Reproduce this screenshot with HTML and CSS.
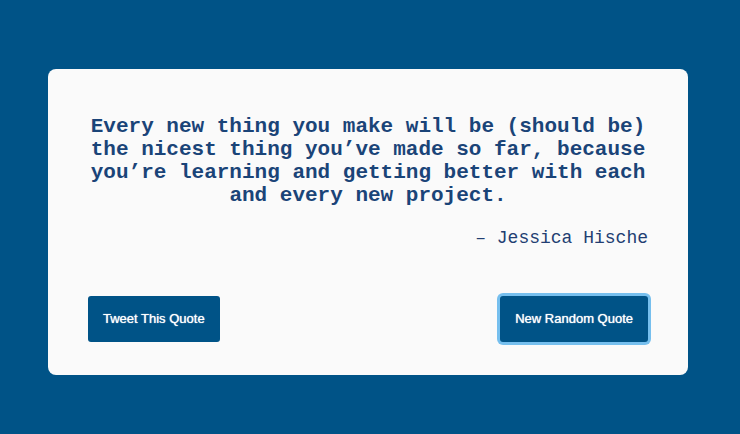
FILE: index.html
```html
<!DOCTYPE html>
<html lang="en">
<head>
<meta charset="utf-8">
<meta name="viewport" content="width=device-width, initial-scale=1">
<title>Random Quote</title>
<link rel="stylesheet" href="styles.css">
</head>
<body>
<main class="card">
  <blockquote class="quote">Every new thing you make will be (should be) the nicest thing you’ve made so far, because you’re learning and getting better with each and every new project.</blockquote>
  <p class="author">– Jessica Hische</p>
  <div class="actions">
    <button class="button" type="button">Tweet This Quote</button>
    <button class="button button-active" type="button">New Random Quote</button>
  </div>
</main>
</body>
</html>
```

FILE: styles.css
```css
* {
  box-sizing: border-box;
}

body {
  min-height: 100vh;
  margin: 0;
  padding: 10px 52px 0 48px;
  display: grid;
  align-items: center;
  background: #005387;
  color: #1a4478;
  font-family: "Liberation Mono", "Courier New", monospace;
}

.card {
  width: 100%;
  max-width: 800px;
  margin: 0 auto;
  padding: 46px 40px 33px;
  border-radius: 8px;
  background: #fafafa;
}

.quote {
  margin: 0;
  font-size: 21px;
  font-weight: 700;
  line-height: 23px;
  text-align: center;
}

.author {
  margin: 21px 0 48px;
  color: #223e72;
  font-size: 18px;
  line-height: 20px;
  text-align: right;
}

.actions {
  display: flex;
  justify-content: space-between;
  gap: 16px;
}

.button {
  padding: 15px;
  border: 0;
  border-radius: 3px;
  background: #005387;
  color: #fff;
  font-family: "Liberation Sans", Arial, sans-serif;
  font-size: 13px;
  line-height: 16px;
  text-shadow: 0 0 1px #fff;
  cursor: pointer;
}

.button-active {
  box-shadow: 0 0 0 3px #76bfee;
}
```
